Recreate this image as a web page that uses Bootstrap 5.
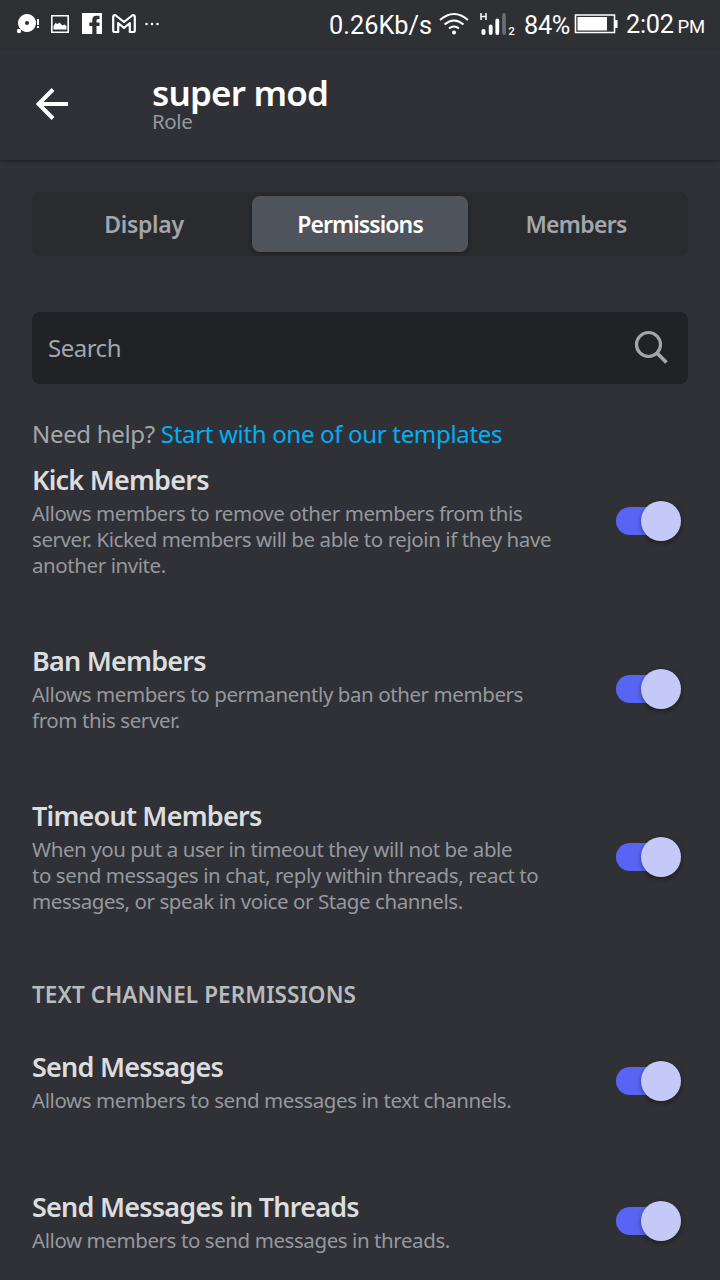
<!DOCTYPE html>
<html lang="en">
<head>
<meta charset="utf-8">
<meta name="viewport" content="width=device-width, initial-scale=1">
<title>super mod - Role</title>
<link href="https://cdn.jsdelivr.net/npm/bootstrap@5.3.0/dist/css/bootstrap.min.css" rel="stylesheet">
<style>
body{background:#2f3136;font-family:"Noto Sans",sans-serif;color:#96989d;height:1280px;overflow:hidden;white-space:nowrap}
.status{height:50px;font:25.3px/50px Roboto,sans-serif;color:#fff;background:#2f3034;padding-right:15px}
.status svg{display:block;flex:none}
.status span{padding-top:1px}
.pct{width:46px;letter-spacing:-.3px}
.clk{width:79px;letter-spacing:-.3px}
.pm{font-size:18.5px;margin-left:4px}
.appbar{height:110px;padding-left:36px;box-shadow:0 1px 3px rgba(0,0,0,.45)}
.appbar h1{font-size:35px;line-height:34px;font-weight:600;color:#fff;letter-spacing:-.8px}
.appbar p{font-size:20.5px;line-height:22px;color:#96989d;letter-spacing:-.4px}
.appbar .titles{margin-left:84px;padding-top:26px}
.seg{margin-top:32px;height:64px;padding:4px;border-radius:8px;background:#2a2b2f;font-size:23px;font-weight:600;color:#a3a6aa;letter-spacing:-.7px}
.seg>div{border-radius:8px}
.seg .on{background:#4f545c;color:#fff;box-shadow:0 1px 4px rgba(0,0,0,.3);letter-spacing:-.9px}
.seg .wide{letter-spacing:-.3px}
.searchbox{margin-top:56px;height:72px;border-radius:8px;background:#202225;padding:0 18px 0 16px;font-size:24px;color:#a3a6aa;letter-spacing:-.5px}
.help{margin-top:33px;height:34px;font-size:24px;line-height:34px;color:#a3a6aa;letter-spacing:-.32px}
.help a{color:#00aff4}
.perm h2{font-size:27px;line-height:34px;font-weight:600;color:#dcddde;margin:-1px 0 3px;letter-spacing:-.78px}
.perm p{font-size:20.5px;line-height:26px;margin:0;color:#96989d;letter-spacing:-.42px}
.h1st{height:181px;margin-top:-21px}
.h3l{height:181px}.h2l{height:155px}.h1l{height:140px}
.h1l>div:first-child{padding-top:2px}
.cat{height:64px;font-size:22.5px;line-height:30px;padding-top:33px;font-weight:600;color:#b9bbbe;letter-spacing:.07px}
.toggle{width:65px;height:28px;margin-right:7px;border-radius:14px;background:linear-gradient(90deg,#5865f2 50px,transparent 50px)}
.knob{width:40px;height:40px;border-radius:50%;background:#c5c9f7;box-shadow:0 2px 5px rgba(0,0,0,.4)}
</style>
</head>
<body>
<header class="status d-flex align-items-center">
<svg width="160" height="50" viewBox="0 0 160 50" fill="#fff"><path fill-rule="evenodd" d="M27 14a9 9 0 1 0 .01 0zM27 21a2 2 0 1 1-.01 0z"/><circle cx="19" cy="31" r="2.2"/><path d="M37 19h2v6h-2zM37 26h2v2h-2z"/><path d="M51.800 15.800h16.400v16.400H51.800z" fill="none" stroke="#fff" stroke-width="1.600"/><path d="M53.500 29.500v-3.500l2-3 2 1 2-1.500 3 3 2-1 2 1.500v3.500z"/><path d="M82 13h20v21h-5.500v-8h3v-3.500h-3v-2q0-1.500 1.500-1.500h1.500v-3.200h-3q-4.200 0-4.200 4.200v2.500h-3V26h3v8H82z"/><path d="M113.200 17q0-2 2-2l8.800 7 8.800-7q2 0 2 2v14q0 1-1 1h-4v-9l-5.800 5-5.800-5v9h-4q-1 0-1-1z" fill="none" stroke="#fff" stroke-width="2.200" stroke-linejoin="round"/><circle cx="146.500" cy="24" r="1.300"/><circle cx="152" cy="24" r="1.300"/><circle cx="157.500" cy="24" r="1.300"/></svg>
<span class="ms-auto">0.26Kb/s</span>
<svg width="92" height="50" viewBox="432 0 92 50" fill="none" stroke="#fff" stroke-width="2"><path d="M440 20q14-12 28 0M444.500 24.500q9.500-8 19 0M449 28.500q5-4 10 0"/><circle cx="454" cy="32.500" r="2" fill="#fff" stroke="none"/><path d="M481 13v7M486 13v7M481 16.500h5" stroke-width="1.500"/><path d="M483.500 31v2" stroke-width="4" stroke-linecap="round"/><path d="M490.700 26.500v6.500M497.300 20.500v12.500" stroke-width="3.800" stroke-linecap="round"/><path d="M504 15v18" stroke="#6b6c70" stroke-width="3.800" stroke-linecap="round"/><text x="508.500" y="35" font-size="11" fill="#fff" stroke="none" font-weight="500" font-family="Roboto">2</text></svg>
<span class="pct">84%</span>
<svg width="56" height="50" viewBox="570 0 56 50"><path d="M575.500 15h39v17.500h-39z" fill="none" stroke="#fff" stroke-width="1.600"/><path d="M577.500 17h29.500V30.500h-29.500zM615 20h2.500v8H615z" fill="#fff"/></svg>
<span class="clk">2:02<small class="pm">PM</small></span>
</header>
<div class="appbar d-flex">
<svg class="mt-auto mb-auto" width="32" height="34" viewBox="0 0 32 34" fill="none" stroke="#fff" stroke-width="4"><path d="M32 16H3M17 1.500L2.500 16 17 30.500"/></svg>
<div class="titles"><h1 class="m-0">super mod</h1><p class="m-0">Role</p></div>
</div>
<main class="px-4 mx-2">
<nav class="seg d-flex text-center">
<div class="col-4 d-flex align-items-center justify-content-center wide">Display</div>
<div class="col-4 d-flex align-items-center justify-content-center on">Permissions</div>
<div class="col-4 d-flex align-items-center justify-content-center">Members</div>
</nav>
<div class="searchbox d-flex align-items-center justify-content-between"><span>Search</span>
<svg width="38" height="38" viewBox="632 329 38 38" fill="none" stroke="#a3a6aa" stroke-width="3.200"><circle cx="648.500" cy="344.500" r="12"/><path d="M657 353l9.500 9.500" stroke-width="3.800"/></svg></div>
<div class="help">Need help? <a class="text-decoration-none" href="#">Start with one of our templates</a></div>
<section class="perm h1st d-flex align-items-center justify-content-between"><div><h2>Kick Members</h2><p>Allows members to remove other members from this<br>server. Kicked members will be able to rejoin if they have<br>another invite.</p></div><div class="toggle d-flex align-items-center justify-content-end"><span class="knob flex-shrink-0"></span></div></section>
<section class="perm h2l d-flex align-items-center justify-content-between"><div><h2>Ban Members</h2><p>Allows members to permanently ban other members<br>from this server.</p></div><div class="toggle d-flex align-items-center justify-content-end"><span class="knob flex-shrink-0"></span></div></section>
<section class="perm h3l d-flex align-items-center justify-content-between"><div><h2>Timeout Members</h2><p>When you put a user in timeout they will not be able<br>to send messages in chat, reply within threads, react to<br>messages, or speak in voice or Stage channels.</p></div><div class="toggle d-flex align-items-center justify-content-end"><span class="knob flex-shrink-0"></span></div></section>
<div class="cat">TEXT CHANNEL PERMISSIONS</div>
<section class="perm h1l d-flex align-items-center justify-content-between"><div><h2>Send Messages</h2><p>Allows members to send messages in text channels.</p></div><div class="toggle d-flex align-items-center justify-content-end"><span class="knob flex-shrink-0"></span></div></section>
<section class="perm h1l d-flex align-items-center justify-content-between"><div><h2>Send Messages in Threads</h2><p>Allow members to send messages in threads.</p></div><div class="toggle d-flex align-items-center justify-content-end"><span class="knob flex-shrink-0"></span></div></section>
</main>
<script src="https://cdn.jsdelivr.net/npm/bootstrap@5.3.0/dist/js/bootstrap.bundle.min.js"></script>
</body>
</html>
